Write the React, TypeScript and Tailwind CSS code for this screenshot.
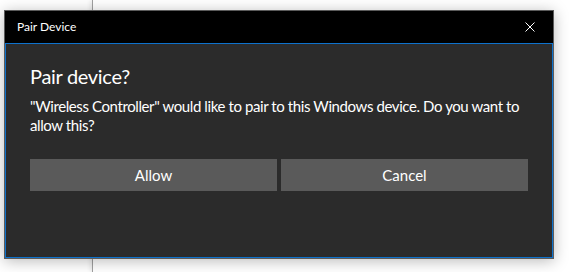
export default function App() {
  return (
    <div
      className="relative w-[569px] h-[272px] overflow-hidden bg-white flex"
      style={{ fontFamily: 'Lato, "Noto Sans", sans-serif' }}
    >
      {/* window behind the dialog */}
      <div className="w-[92px] h-full bg-white" />
      <div className="flex-1 h-full bg-white border-l border-[#a0a0a0] shadow-[-2px_0_4px_rgba(0,0,0,0.08)]" />

      {/* dialog */}
      <div className="absolute left-[4px] top-[10px] w-[550px] h-[249px] flex flex-col border border-[#5b5b5b] shadow-[0_2px_14px_rgba(0,0,0,0.28)]">
        <div className="h-[32px] bg-black flex items-center justify-between pl-[12px] pr-[18px]">
          <span className="text-white text-[12px] leading-none">Pair Device</span>
          <svg width="10" height="10" viewBox="0 0 10 10" className="text-white">
            <path d="M0.5 0.5 L9.5 9.5 M9.5 0.5 L0.5 9.5" stroke="currentColor" strokeWidth="1" fill="none" />
          </svg>
        </div>
        <div className="flex-1 bg-[#2b2b2b] border border-[#0e72cc] px-6 pt-[18px]">
          <h1 className="text-white text-[20px] leading-[28px] tracking-[-0.3px]">Pair device?</h1>
          <p className="mt-[7px] text-white text-[15px] leading-[19px] tracking-[-0.4px] whitespace-nowrap">
            "Wireless Controller" would like to pair to this Windows device. Do you want to
            <br />
            allow this?
          </p>
          <div className="mt-[24px] grid grid-cols-2 gap-1">
            <button className="h-[32px] bg-[#5a5a5a] text-white text-[15px]">Allow</button>
            <button className="h-[32px] bg-[#5a5a5a] text-white text-[15px]">Cancel</button>
          </div>
        </div>
      </div>
    </div>
  );
}
